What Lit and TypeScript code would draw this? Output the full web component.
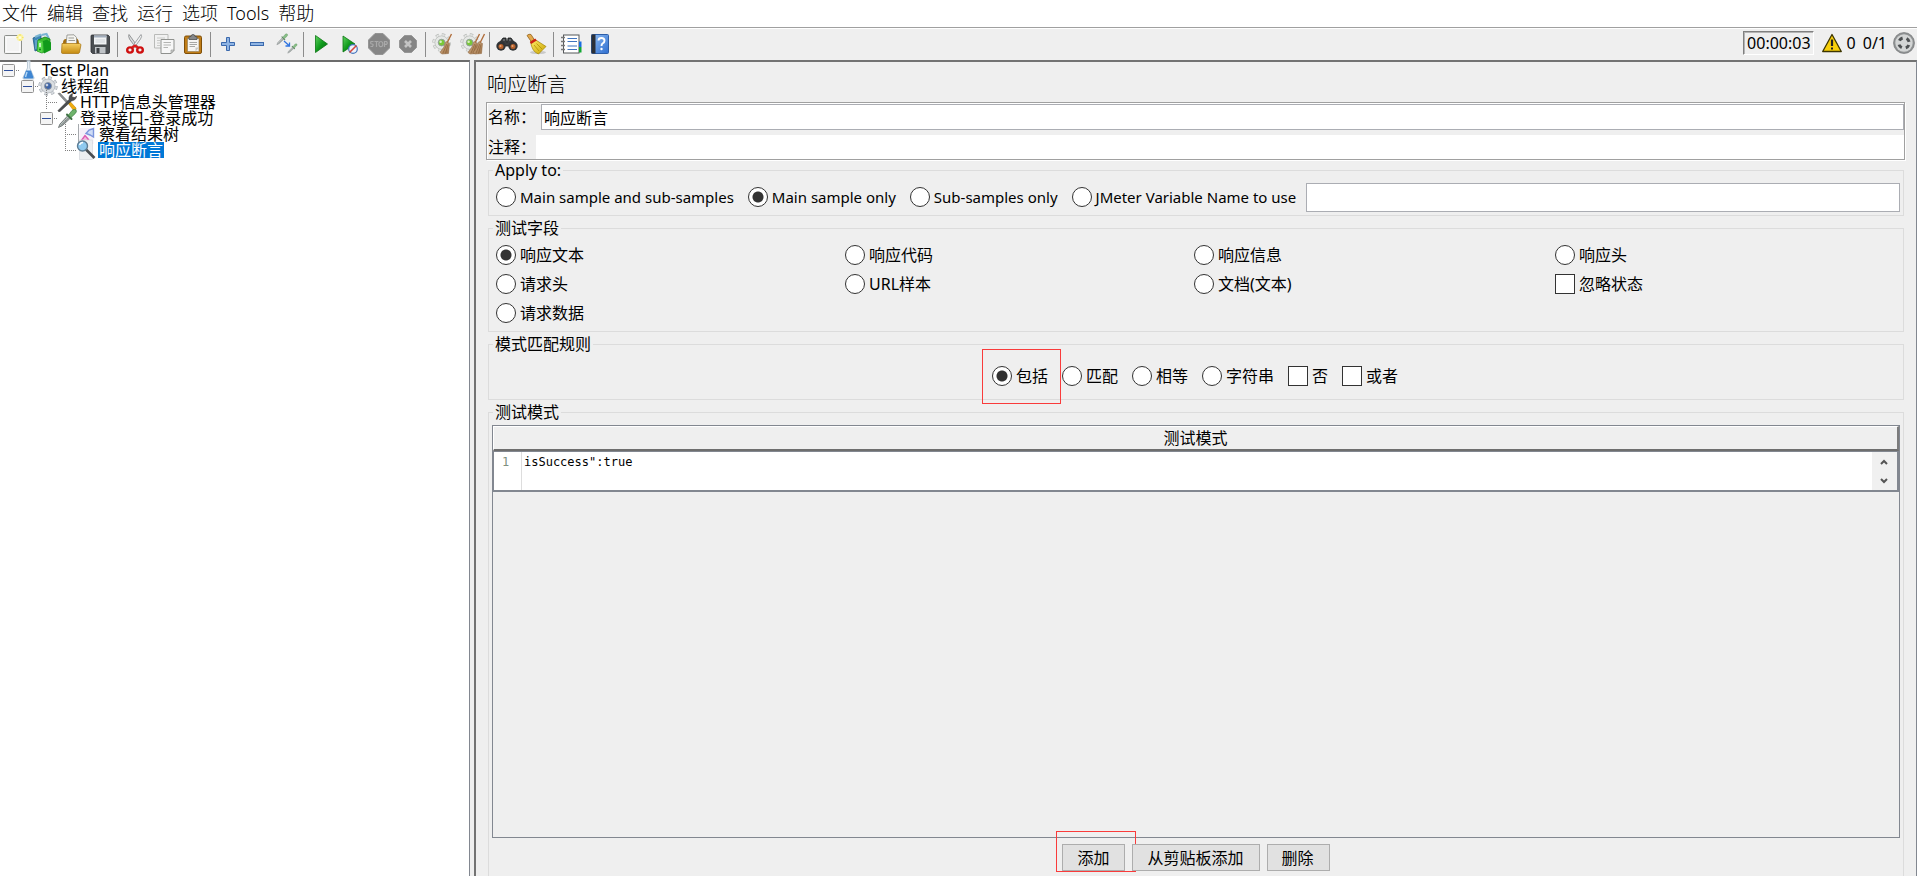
import { LitElement, html, css, svg } from "lit";
import { customElement, property } from "lit/decorators.js";
import { classMap } from "lit/directives/class-map.js";

const defs = svg`
  <linearGradient id="gold" x1="0" y1="0" x2="0" y2="1"><stop offset="0" stop-color="#f6cf62"/><stop offset="1" stop-color="#c48a10"/></linearGradient>
  <linearGradient id="green" x1="0" y1="0" x2="1" y2="1"><stop offset="0" stop-color="#5fd35f"/><stop offset=".5" stop-color="#0f9a1c"/><stop offset="1" stop-color="#056b0c"/></linearGradient>
  <linearGradient id="blue" x1="0" y1="0" x2="1" y2="1"><stop offset="0" stop-color="#8fbcf2"/><stop offset="1" stop-color="#2f6fd0"/></linearGradient>
  <linearGradient id="broom" x1="0" y1="0" x2="1" y2="1"><stop offset="0" stop-color="#fff06a"/><stop offset="1" stop-color="#c9a100"/></linearGradient>
  <linearGradient id="straw" x1="0" y1="0" x2="1" y2="1"><stop offset="0" stop-color="#d9b58d"/><stop offset="1" stop-color="#9a6f45"/></linearGradient>`;

const gear = (fill: string, core: string, edge: string) => svg`
  <circle cx="10" cy="10" r="8.2" fill="none" stroke=${edge} stroke-width="3" stroke-dasharray="3.4 3.04"/>
  <circle cx="10" cy="10" r="8" fill="none" stroke=${fill} stroke-width="2" stroke-dasharray="2.6 3.68" stroke-dashoffset="-.4"/>
  <circle cx="10" cy="10" r="7" fill=${fill} stroke=${edge} stroke-width=".7"/>
  <circle cx="10" cy="10" r="3.5" fill=${core} stroke="#8d959e" stroke-width=".9"/>
  <circle cx="9" cy="9" r="1.3" fill="#fff" opacity=".7"/>`;

const dropper = svg`
  <path d="M1.500 19.500 3 16 11 7.500 13.500 10 5.500 17.500Z" fill="#b9c2c0" stroke="#6a7070" stroke-width=".9"/>
  <path d="M4 17.500 12 9.500" stroke="#6b7371" stroke-width="1"/>
  <path d="M10 6.500 14.500 11" stroke="#3f7044" stroke-width="2" stroke-linecap="round"/>
  <path d="M11.500 7 15 2.500Q17.500.500 19 2 20.300 3.700 18 5.800L14 9.500Z" fill="#6fb46c" stroke="#3d7d42" stroke-width=".7"/>`;

const bristles = svg`
  <path d="M18.500 0 14 9" stroke="#b06e3c" stroke-width="1.400"/>
  <path d="M13 7.500 16.500 9.500 15.500 19.500 9 20 7 18.500Q11.500 13.500 13 7.500Z" fill="url(#straw)" stroke="#8a6038" stroke-width=".5"/>
  <path d="M13.800 10 10 19M15 10.500 12.500 19.500" stroke="#855a31" stroke-width=".6"/>`;

const ICONS: Record<string, unknown> = {
  new: svg`<rect x="1.500" y="1.500" width="17" height="18" rx="1" fill="#ececec" stroke="#8c8f8b"/><rect x="3" y="3" width="14" height="15" fill="#f3f3f3" stroke="#fff"/><circle cx="17" cy="3.500" r="3.500" fill="#fbf3a0"/><path d="M17 0v7M13.500 3.500h7" stroke="#f4e36a" stroke-width="1.200"/><circle cx="17" cy="3.500" r="1.600" fill="#fffdd8"/>`,
  templates: svg`<path d="M1 4 9 1V15L3 17Z" fill="#3d86b8" stroke="#1f5a85" stroke-width=".8"/><path d="M3 3 9 .500M9.500 1l5-1 2.500 5" stroke="#79b4d2" stroke-width="2.200" fill="none"/><path d="M4 6V15M6 5V14" stroke="#9cc7de" stroke-width=".8"/><path d="M6 6 13 3 18 5V15L10 19 5 17Z" fill="#3dbb32" stroke="#137d13" stroke-width=".8"/><path d="M11 7 15 5.500 19 8.500V16L12 19.500Z" fill="#119a1b"/><path d="M6 6.500 10.500 8V19L5.500 17Z" fill="#58d94c"/><rect x="7" y="9" width="2" height="4" fill="#c9f3c2"/><circle cx="8" cy="15.500" r="1" fill="#127c16"/>`,
  open: svg`<path d="M2 9Q2 5 5 5L15 4Q18 5 18 10V18H2Z" fill="#a46d0c"/><path d="M6 1 13 .800 15.500 3.500V11H5Z" fill="#f4f4f0" stroke="#8a8a85" stroke-width=".8"/><path d="M7.500 4H13M7.500 6.500H14" stroke="#9b9b96"/><path d="M1 9.500H18.500L20 10.500 18.500 18.500Q18 19.500 17 19.500H1.500Q.500 19.500.500 18Z" fill="url(#gold)" stroke="#a3700d" stroke-width=".7"/>`,
  save: svg`<path d="M1 2Q1 1 2 1H18L19.500 2.500V18Q19.500 19.500 18.500 19.500H2.500L1 18Z" fill="#4a4e52" stroke="#2c2f32" stroke-width=".8"/><rect x="4" y="1.500" width="12.500" height="9" fill="#f0f2f4"/><rect x="4" y="1.500" width="12.500" height="2" fill="#a2adbc"/><path d="M5.500 6H15M5.500 8H15" stroke="#cfd3d8"/><rect x="5" y="13" width="10.500" height="6.500" fill="#bfc3c7"/><rect x="6.500" y="14" width="3" height="5" fill="#3a3e42"/>`,
  cut: svg`<path d="M4 .500Q3 2 4.500 5L11 14 13 13Z" fill="#dcdedf" stroke="#7d8082" stroke-width=".8"/><path d="M16 .500Q17.500 2 15.500 5L9 14 7 13Z" fill="#f2f3f3" stroke="#8b8e90" stroke-width=".8"/><ellipse cx="5" cy="16" rx="2.800" ry="2.600" fill="none" stroke="#cf1010" stroke-width="2.400"/><ellipse cx="15" cy="16" rx="2.800" ry="2.600" fill="none" stroke="#cf1010" stroke-width="2.400"/><path d="M7 13.500 10 11.500 13 13.500" stroke="#d91c1c" stroke-width="2.200" fill="none"/>`,
  copy: svg`<path d="M.500.500H14V14H.500Z" fill="#f1f1f1" stroke="#b9bab8"/><path d="M3 4H11M3 6.500H6M3 9H6M3 11.500H6" stroke="#c9cac8"/><path d="M7 5.500H20V16.500L17 19.500H7Z" fill="#f7f7f7" stroke="#8f918e"/><path d="M9.500 8.500H17M9.500 11H17M9.500 13.500H14" stroke="#b3b4b2"/><path d="M20 16H17V19.500Z" fill="#cfcfcf" stroke="#8f918e" stroke-width=".6"/>`,
  paste: svg`<rect x="1.500" y="2" width="17" height="17.500" rx="1.500" fill="#c07d17" stroke="#7f4f08"/><rect x="4.500" y="4.500" width="11.500" height="13" fill="#f6f6f4" stroke="#8e7a55" stroke-width=".6"/><path d="M6.500 8.500H14M6.500 10.500H14M6.500 12.500H12" stroke="#a7a8a5"/><path d="M16 13.500H12.500V17.500Z" fill="#c9c9c6"/><path d="M6 5.500V3Q6 2.500 8 2.500 8 .500 10 .500T12 2.500Q14 2.500 14 3V5.500Z" fill="#84878a" stroke="#4b4e50" stroke-width=".8"/>`,
  plus: svg`<path d="M8.500 3.500H11.500V8.500H16.500V11.500H11.500V16.500H8.500V11.500H3.500V8.500H8.500Z" fill="#8fb4e3" stroke="#3a69ad"/>`,
  minus: svg`<rect x="3.500" y="8.500" width="13" height="3" fill="#8fb4e3" stroke="#3a69ad"/>`,
  toggle: svg`<g opacity=".8"><g transform="translate(0 -1) scale(.6)">${dropper}</g><g transform="translate(11 9) scale(.52)">${dropper}</g></g><path d="M8 7 13 11.500M13.500 8.500V12H9.500" stroke="#2f74e0" stroke-width="1.300" fill="none"/>`,
  play: svg`<path d="M4.500 1.500 16.500 10 4.500 18.500Z" fill="url(#green)" stroke="#0a7512" stroke-width=".8"/>`,
  playNow: svg`<path d="M3 2 15 10 3 18Z" fill="url(#green)" stroke="#0a7512" stroke-width=".8"/><circle cx="13" cy="15" r="4.300" fill="#eef2fa" stroke="#4775bd" stroke-width="1.200"/><path d="M9.500 18.500 16.500 11.500" stroke="#d3473e" stroke-width="1.600"/>`,
  stop: svg`<path d="M6-.500H14L20.500 6V14L14 20.500H6L-.500 14V6Z" fill="#868686" stroke="#959595"/><path d="M4.500 7.500H2Q1 10 3 10T3.500 12.500H1.500M5.500 7.500H9.500M7.500 7.500V13M11.800 7.500a2 2.600 0 1 0 .1 0M15.500 13V7.500H17.500Q19 9 17.500 10.300H15.500" stroke="#a9a9a9" stroke-width="1.200" fill="none"/>`,
  shutdown: svg`<path d="M6.500 1.500H13.500L18.500 6.500V13.500L13.500 18.500H6.500L1.500 13.500V6.500Z" fill="#858585" stroke="#979797"/><path d="M7 7 13 13M13 7 7 13" stroke="#c4c4c4" stroke-width="2.600"/>`,
  clear: svg`<g transform="translate(-1 -1) scale(.96)">${gear("#e6e8e6", "#79c837", "#b5b8b5")}</g>${bristles}`,
  clearAll: svg`<g transform="translate(-2 -1) scale(.96)">${gear("#e6e8e6", "#79c837", "#b5b8b5")}</g><g transform="translate(-1 0)">${bristles}</g><g transform="translate(4 0)">${bristles}</g>`,
  search: svg`<path d="M6 4 9 4 9.500 8H10.500L11 4 14 4 17 8 13 12H7L3 8Z" fill="#3a3d40" stroke="#17191b" stroke-width=".8"/><path d="M6 6 8 6M12 6H14" stroke="#8a8f93" stroke-width="1.200"/><circle cx="4" cy="12" r="4.700" fill="#303336"/><circle cx="16" cy="12" r="4.700" fill="#303336"/><circle cx="4" cy="12.500" r="2.500" fill="#b5612c"/><circle cx="16" cy="12.500" r="2.500" fill="#b5612c"/><circle cx="3.500" cy="12" r="1" fill="#e8a578"/><circle cx="15.500" cy="12" r="1" fill="#e8a578"/>`,
  sweep: svg`<ellipse cx="12" cy="18.500" rx="8" ry="1.600" fill="#c9c9c9"/><path d="M1 1.500Q3-.500 5 .500L8.500 6 5.500 8Z" fill="#e3a84c" stroke="#93631a" stroke-width=".8"/><path d="M4.500 7.500 9 5.500 20 12.500 12.500 20Q6 18 4.500 7.500Z" fill="url(#broom)" stroke="#a08300" stroke-width=".7"/><path d="M4.500 9 10 5.500" stroke="#cc2214" stroke-width="2.600"/><path d="M8 11 13 17M10.500 9.500 16 15" stroke="#b39400" stroke-width=".8"/>`,
  list: svg`<rect x="2.500" y="1" width="15.500" height="18" fill="#fff" stroke="#55585b"/><rect x="18" y="7.500" width="2.500" height="5.500" fill="#1a6ee0"/><rect x="18" y="13" width="2.500" height="5.500" fill="#12a832"/><path d="M0 3.500H4M0 7.500H4M0 11.500H4M0 15.500H4" stroke="#777" stroke-width="1.400"/><path d="M6.500 4.500H16M6.500 7.500H16M6.500 12H16M6.500 15.500H16" stroke="#3f74bf" stroke-width="1.200"/>`,
  help: svg`<rect x="1.500" y=".500" width="17" height="19" rx="1" fill="url(#blue)" stroke="#2d5ea8"/><rect x="1.500" y=".500" width="4" height="19" fill="#2b2f36"/><path d="M8.500 6.500Q8.500 4 11.500 4T14.500 6.700Q14.500 8.500 12.500 9.500 11.500 10.200 11.500 12" stroke="#fff" stroke-width="1.900" fill="none"/><circle cx="11.500" cy="15" r="1.200" fill="#fff"/>`,
  warning: svg`<path d="M10 1.500 19.300 18.500H.700Z" fill="#f7cf0a" stroke="#3d3500" stroke-width="1.300" stroke-linejoin="round"/><path d="M10 6.500V13" stroke="#222" stroke-width="2.200"/><rect x="9" y="14.500" width="2" height="2" fill="#222"/>`,
  remote: svg`<circle cx="10" cy="10" r="10.500" fill="#8f9293" stroke="#6e7172" stroke-width=".6"/><circle cx="10" cy="10" r="8.700" fill="#d3d5d5"/><circle cx="10" cy="10" r="5.200" fill="none" stroke="#4c4f51" stroke-width="3" stroke-dasharray="4 4.168" stroke-dashoffset="-2.084"/>`,
  flask: svg`<path d="M7.500 1H11.500M8.500 1V8L4 17.500Q3.500 19 5 19H14Q15.500 19 15 17.500L10.800 8V1Z" fill="#e9f1f8" stroke="#bccbd8"/><path d="M7 10.500H12L14.500 17.500Q14.500 18.500 13.500 18.500H5.500Q4 18.500 4.500 17.500Z" fill="#3f86d2"/><path d="M8 12 6.500 17" stroke="#b5d8f5" stroke-width="1.400"/>`,
  gear: gear("#d9dde1", "#3d64a8", "#a9afb5"),
  tools: svg`<path d="M1 1.500 3 1 12 10.500 10.500 12Z" fill="#8e9192" stroke="#5e6162" stroke-width=".5"/><path d="M11 11 13 9.500 19 16Q19.500 18.500 17 19Z" fill="#f2ad0c" stroke="#b87f00" stroke-width=".6"/><path d="M1 18.500 12 7.500Q11.500 3 15.500 1.500L15 5 18 5.500 19.500 4Q19.500 8 14.500 9L3 19.500Q1 20 1 18.500Z" fill="#4b4e50" stroke="#333" stroke-width=".5"/>`,
  dropper,
  results: svg`<path d="M2.500 0V20" stroke="#a5a9ad"/><rect x="3.500" y="4" width="14" height="16" fill="#f5f0f8"/><path d="M5 17 9 11.500 12.500 15.500 9 18.500Z" fill="#f3b8dc" stroke="#dc5ab3" stroke-width="1.400"/><path d="M10 9.500 13 6 17.500 4.500V13L14 11Z" fill="#cfdcf6" stroke="#7c95dd" stroke-width="1.400"/><path d="M4 19H17" stroke="#eab0d6"/>`,
  magnifier: svg`<rect x="3.500" y="0" width="13" height="19.500" fill="#eceef1" stroke="#d6d9dd" stroke-width=".7"/><path d="M10 9.500 18.500 18" stroke="#4b4e52" stroke-width="2.600"/><circle cx="6.500" cy="6" r="5" fill="#8fcaf0" stroke="#5d7d95" stroke-width="1.400"/><path d="M3.500 5Q4.500 2.500 7 2.500" stroke="#fff" stroke-width="1.400" fill="none"/>`,
};

@customElement("jm-icon")
class JmIcon extends LitElement {
  static styles = css`
    :host { display: block; width: 20px; height: 20px; flex: none; }
    .glyph { display: block; width: 100%; height: 100%; overflow: visible; }
  `;
  @property() name = "";
  render() {
    return html`<svg class="glyph" viewBox="0 0 20 20" aria-hidden="true"><defs>${defs}</defs>${ICONS[this.name]}</svg>`;
  }
}

interface TreeRow { label: string; icon: string; depth: number; leaf?: boolean; last?: boolean; selected?: boolean; }

@customElement("jm-tree")
class JmTree extends LitElement {
  static styles = css`
    :host { display: block; }
    .tree { list-style: none; margin: 0; padding: 0; }
    .row { display: flex; align-items: center; height: 16px; }
    .d1 { padding-left: 19px; }
    .d2 { padding-left: 38px; }
    .d3 { padding-left: 57px; }
    .guide { display: block; flex: none; width: 19px; height: 16px; overflow: visible; }
    .label { display: block; margin-left: 2px; padding: 0 1px; line-height: 16px; white-space: nowrap; }
    .selected .label { background: #0078d7; color: #fff; }
  `;
  rows: TreeRow[] = [
    { label: "Test Plan", icon: "flask", depth: 0 },
    { label: "线程组", icon: "gear", depth: 1 },
    { label: "HTTP信息头管理器", icon: "tools", depth: 2, leaf: true },
    { label: "登录接口-登录成功", icon: "dropper", depth: 2 },
    { label: "察看结果树", icon: "results", depth: 3, leaf: true },
    { label: "响应断言", icon: "magnifier", depth: 3, leaf: true, last: true, selected: true },
  ];
  guide(row: TreeRow) {
    return row.leaf
      ? svg`<path d=${row.last ? "M8.500 -8V8" : "M8.500 -8V16"} stroke="#808080" stroke-dasharray="1 1"/><path d="M8 8.500H19" stroke="#808080" stroke-dasharray="1 1"/>`
      : svg`<rect x="2.500" y="2.500" width="12" height="12" rx="1" fill="#f4f4f4" stroke="#919191"/><path d="M4 8.500H13" stroke="#2f4f9c"/><path d="M16 8.500H19" stroke="#808080" stroke-dasharray="1 1"/>`;
  }
  render() {
    return html`<ul class="tree">${this.rows.map(r => html`
      <li class=${classMap({ row: true, ["d" + r.depth]: true, selected: !!r.selected })}>
        <svg class="guide" viewBox="0 0 19 16" aria-hidden="true">${this.guide(r)}</svg>
        <jm-icon name=${r.icon}></jm-icon>
        <span class="label">${r.label}</span>
      </li>`)}</ul>`;
  }
}

interface Choice { label: string; type?: string; checked?: boolean; marked?: boolean; }

@customElement("app-root")
class AppRoot extends LitElement {
  static styles = css`
    :host {
      display: flex; flex-direction: column; height: 100vh; overflow: hidden;
      background: #efefef; color: #000;
      font: 16px/20px "Noto Sans", "Noto Sans CJK SC", sans-serif;
    }
    * { box-sizing: border-box; }
    button, input, textarea { font: inherit; color: inherit; margin: 0; border-radius: 0; outline: none; }
    .menu { display: flex; gap: 9px; height: 28px; padding: 0 2px; background: #fff; border-bottom: 1px solid #a0a0a0; font-size: 18px; font-weight: 300; }
    .menu-item { border: 0; padding: 0; background: none; line-height: 26px; height: 26px; }
    .toolbar { display: flex; align-items: center; height: 32px; border-top: 1px solid #fff; flex: none; }
    .group { display: flex; align-items: center; gap: 7px; height: 25px; padding: 0 6px; border-right: 1px solid #8c8c8c; }
    .group:first-child { padding-left: 2px; }
    .group:nth-child(7) { border-right: 0; }
    .tool { display: grid; place-items: center; width: 22px; height: 22px; padding: 0 0 2px; border: 0; background: none; }
    .status { display: flex; align-items: center; margin-left: auto; padding: 0 3px 3px 0; }
    .timer { height: 24px; padding: 0 2px 0 3px; border: 1px solid; border-color: #808080 #fff #fff #808080; box-shadow: inset 1px 1px #b4b4b4; line-height: 22px; margin-right: 8px; }
    .warn { margin-right: 5px; }
    .count { margin-right: 7px; }
    .body { display: grid; grid-template-columns: 470px minmax(0, 1fr); column-gap: 4px; flex: 1; min-height: 0; }
    .side { background: #fff; border-top: 2px solid #6c6c6c; border-right: 1px solid #828790; }
    .main { display: flex; flex-direction: column; min-height: 0; border: 2px solid #737373; border-right: 1px solid #828790; border-bottom: 0; padding: 0 11px 0 10px; }
    .title { margin: 0; padding: 11px 0 5px 1px; font-size: 20px; line-height: 24px; font-weight: 300; }
    .naming { border: 1px solid #a0a0a0; padding-top: 1px; box-shadow: 1px 1px #fff, inset 1px 1px #fff; flex: none; margin-bottom: 1px; }
    .line { display: flex; align-items: center; padding-left: 1px; }
    .line + .line { margin-top: 5px; }
    .line-label { width: 53px; }
    .line-label.short { width: 48px; }
    .text { flex: 1; min-width: 0; background: #fff; border: 1px solid #abadb3; padding: 0 2px; }
    .name { height: 26px; }
    .comment { height: 24px; border: 0; }
    .variable { height: 29px; margin: 0 3px 0 -4px; }
    .frame { margin: 0 1px 3px 2px; padding: 0; border: 1px solid #dcdcdc; min-width: 0; flex: none; }
    .legend { margin-left: 4px; padding: 0 2px; line-height: 19px; height: 19px; }
    .choices { display: flex; align-items: flex-start; gap: 1px 14px; padding: 3px 0 3px 7px; }
    .scopes { font-size: 15px; }
    .centered { justify-content: center; padding: 8px 2px 9px 0; }
    .fields { display: grid; grid-template-columns: 349fr 349fr 361fr 345fr; column-gap: 0; padding-right: 3px; padding-bottom: 4px; }
    .choice { display: flex; align-items: center; gap: 4px; height: 28px; white-space: nowrap; position: relative; justify-self: start; }
    .mark { appearance: none; width: 20px; height: 20px; background: #fff; border: 1px solid #333; flex: none; }
    .radio { border-radius: 50%; }
    .radio:checked { background: radial-gradient(circle, #333 5px, #fff 6px); }
    .marked::after { content: ""; position: absolute; border: 1px solid #f93b3b; pointer-events: none; }
    .choice.marked::after { inset: -13px -13px -14px -10px; }
    .button.marked::after { inset: -14px -12px -2px -7px; }
    .patterns { display: flex; flex-direction: column; flex: 1; min-height: 0; margin-bottom: 0; border-bottom: 0; }
    .table-box { flex: 1; min-height: 0; margin: 3px 3px 0; border: 1px solid #828790; }
    .table { width: 100%; border-collapse: separate; border-spacing: 0; }
    .head { height: 25px; padding: 0; font-weight: 400; line-height: 20px; border-top: 1px solid #fff; border-bottom: 2px solid #6e6e6e; border-right: 2px solid #7c7c7c; border-left: 1px solid #fff; }
    .cell { padding: 0; border: solid #828790; border-width: 1px 2px 2px 1px; }
    .editor { display: flex; height: 38px; background: #fff; font: 12px/20px "DejaVu Sans Mono", monospace; }
    .gutter { width: 28px; padding-left: 8px; border-right: 1px solid #ddd; color: #7f8f7f; }
    .code { flex: 1; min-width: 0; height: 38px; padding: 0 0 0 2px; border: 0; resize: none; overflow: hidden; background: none; line-height: 20px; }
    .scroll { display: grid; width: 25px; padding-right: 2px; background: #f0f0f0; }
    .arrow { display: grid; place-items: center; padding: 0; border: 0; background: none; }
    .chevron { display: block; width: 8px; height: 6px; }
    .actions { display: flex; justify-content: center; gap: 7px; padding: 6px 0 5px; }
    .button { position: relative; height: 27px; padding: 0 15px 0 14px; border: 1px solid #adadad; background: #e1e1e1; line-height: 24px; }
  `;

  menu = ["文件", "编辑", "查找", "运行", "选项", "Tools", "帮助"];
  tools = [
    ["new", "templates", "open", "save"],
    ["cut", "copy", "paste"],
    ["plus", "minus", "toggle"],
    ["play", "playNow", "stop", "shutdown"],
    ["clear", "clearAll"],
    ["search", "sweep"],
    ["list", "help"],
  ];
  scopes: Choice[] = [
    { label: "Main sample and sub-samples" },
    { label: "Main sample only", checked: true },
    { label: "Sub-samples only" },
    { label: "JMeter Variable Name to use" },
  ];
  fields: Choice[] = [
    { label: "响应文本", checked: true }, { label: "响应代码" }, { label: "响应信息" }, { label: "响应头" },
    { label: "请求头" }, { label: "URL样本" }, { label: "文档(文本)" }, { label: "忽略状态", type: "checkbox" },
    { label: "请求数据" },
  ];
  rules: Choice[] = [
    { label: "包括", checked: true, marked: true }, { label: "匹配" }, { label: "相等" }, { label: "字符串" },
    { label: "否", type: "checkbox" }, { label: "或者", type: "checkbox" },
  ];

  choice(c: Choice, group: string) {
    const type = c.type ?? "radio";
    return html`<label class=${classMap({ choice: true, marked: !!c.marked })}>
      <input class=${classMap({ mark: true, radio: type === "radio" })} type=${type} name=${group} ?checked=${c.checked}>${c.label}</label>`;
  }
  arrow(label: string, d: string) {
    return html`<button class="arrow" aria-label=${label}><svg class="chevron" viewBox="0 0 8 6"><path d=${d} fill="none" stroke="#555" stroke-width="2"/></svg></button>`;
  }

  render() {
    return html`
      <nav class="menu">${this.menu.map(m => html`<button class="menu-item">${m}</button>`)}</nav>
      <div class="toolbar">
        ${this.tools.map(g => html`<div class="group">${g.map(t => html`<button class="tool" aria-label=${t}><jm-icon name=${t}></jm-icon></button>`)}</div>`)}
        <div class="status">
          <span class="timer">00:00:03</span>
          <jm-icon class="warn" name="warning"></jm-icon>
          <span class="count">0</span><span class="count">0/1</span>
          <jm-icon name="remote"></jm-icon>
        </div>
      </div>
      <div class="body">
        <aside class="side"><jm-tree></jm-tree></aside>
        <main class="main">
          <h1 class="title">响应断言</h1>
          <div class="naming">
            <div class="line"><label class="line-label" for="name">名称：</label><input class="text name" id="name" value="响应断言"></div>
            <div class="line"><label class="line-label short" for="comment">注释：</label><input class="text comment" id="comment"></div>
          </div>
          <fieldset class="frame">
            <legend class="legend">Apply to:</legend>
            <div class="choices scopes">${this.scopes.map(c => this.choice(c, "scope"))}<input class="text variable" aria-label="JMeter Variable Name to use"></div>
          </fieldset>
          <fieldset class="frame">
            <legend class="legend">测试字段</legend>
            <div class="choices fields">${this.fields.map(c => this.choice(c, "field"))}</div>
          </fieldset>
          <fieldset class="frame">
            <legend class="legend">模式匹配规则</legend>
            <div class="choices centered">${this.rules.map(c => this.choice(c, "rule"))}</div>
          </fieldset>
          <fieldset class="frame patterns">
            <legend class="legend">测试模式</legend>
            <div class="table-box">
              <table class="table">
                <thead><tr><th class="head">测试模式</th></tr></thead>
                <tbody><tr><td class="cell"><div class="editor">
                  <span class="gutter">1</span>
                  <textarea class="code" aria-label="测试模式" spellcheck="false" .value=${'isSuccess":true'}></textarea>
                  <div class="scroll">${this.arrow("Up", "M1 5 4 2 7 5")}${this.arrow("Down", "M1 1 4 4 7 1")}</div>
                </div></td></tr></tbody>
              </table>
            </div>
            <div class="actions">
              <button class="button marked">添加</button><button class="button">从剪贴板添加</button><button class="button">删除</button>
            </div>
          </fieldset>
        </main>
      </div>`;
  }
}
